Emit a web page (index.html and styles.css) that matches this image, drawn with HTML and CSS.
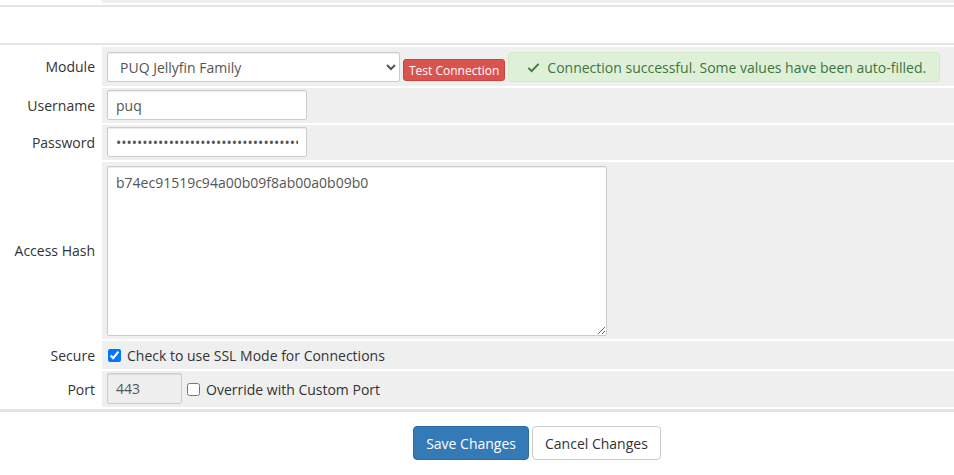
FILE: index.html
```html
<!DOCTYPE html>
<html lang="en">
<head>
    <meta charset="UTF-8">
    <title>Server Configuration</title>
    <link rel="stylesheet" href="styles.css">
</head>
<body>
    <div class="prev-row">
        <div class="prev-label"></div>
        <div class="prev-field"></div>
    </div>
    <div class="divider"></div>
    <div class="spacer"></div>
    <div class="divider flush"></div>

    <table class="form-table">
        <tr>
            <td class="fieldlabel">Module</td>
            <td class="fieldarea">
                <div class="module-line">
                    <select class="form-control select-module">
                        <option>PUQ Jellyfin Family</option>
                    </select>
                    <button type="button" class="btn-test">Test Connection</button>
                    <div class="alert-success">
                        <svg class="check-icon" viewBox="0 0 14 14" width="13" height="13">
                            <path d="M1.5 7.5 L5 11 L12.5 3" fill="none" stroke="#3c763d" stroke-width="2"/>
                        </svg>
                        <span>Connection successful. Some values have been auto-filled.</span>
                    </div>
                </div>
            </td>
        </tr>
        <tr>
            <td class="fieldlabel">Username</td>
            <td class="fieldarea">
                <input type="text" class="form-control input-md" value="puq">
            </td>
        </tr>
        <tr>
            <td class="fieldlabel">Password</td>
            <td class="fieldarea">
                <input type="password" class="form-control input-md" value="aaaaaaaaaaaaaaaaaaaaaaaaaaaaaaaaaaaaaaaaaaaa">
            </td>
        </tr>
        <tr>
            <td class="fieldlabel">Access Hash</td>
            <td class="fieldarea">
                <textarea class="form-control textarea-hash">b74ec91519c94a00b09f8ab00a0b09b0</textarea>
            </td>
        </tr>
        <tr>
            <td class="fieldlabel">Secure</td>
            <td class="fieldarea">
                <label class="check-label">
                    <input type="checkbox" checked>
                    Check to use SSL Mode for Connections
                </label>
            </td>
        </tr>
        <tr>
            <td class="fieldlabel">Port</td>
            <td class="fieldarea">
                <div class="port-line">
                    <input type="text" class="form-control input-port" value="443" disabled>
                    <label class="check-label">
                        <input type="checkbox">
                        Override with Custom Port
                    </label>
                </div>
            </td>
        </tr>
    </table>
    <div class="divider bottom"></div>

    <div class="btn-container">
        <button type="button" class="btn btn-primary">Save Changes</button>
        <button type="button" class="btn btn-default">Cancel Changes</button>
    </div>
</body>
</html>
```

FILE: styles.css
```css
:root {
    --field-bg: #efefef;
    --line: #e2e5e8;
    --border: #cccccc;
    --text: #333333;
    --input-text: #555555;
}

* {
    box-sizing: border-box;
}

body {
    margin: 0;
    font-family: "Open Sans", "Liberation Sans", sans-serif;
    font-size: 14px;
    color: var(--text);
    background: #ffffff;
}

.prev-row {
    display: grid;
    grid-template-columns: 102px 1fr;
    height: 3px;
}

.prev-field {
    background: var(--field-bg);
}

.divider {
    height: 2px;
    margin-top: 2px;
    background: var(--line);
}

.divider.flush {
    margin-top: 0;
}

.divider.bottom {
    height: 3px;
    margin-top: 0;
}

.spacer {
    height: 36px;
}

.form-table {
    width: 100%;
    border-collapse: separate;
    border-spacing: 0 2px;
}

.fieldlabel {
    width: 102px;
    padding: 0 7px 0 0;
    text-align: right;
    white-space: nowrap;
}

.fieldarea {
    background: var(--field-bg);
    padding: 2px 5px 3px;
}

.form-control {
    font-family: inherit;
    font-size: 14px;
    color: var(--input-text);
    background: #ffffff;
    border: 1px solid var(--border);
    border-radius: 2px;
    box-shadow: inset 0 1px 1px rgba(0, 0, 0, 0.075);
}

.module-line {
    display: flex;
    align-items: center;
    gap: 3px;
    padding: 3px 0 1px;
}

.select-module {
    width: 293px;
    height: 30px;
    padding: 0 6px 0 8px;
}

.btn-test {
    align-self: flex-end;
    margin-bottom: 1px;
    height: 22px;
    padding: 0 5px;
    font-family: inherit;
    font-size: 12px;
    color: #ffffff;
    background: #d9534f;
    border: 1px solid #d43f3a;
    border-radius: 3px;
}

.alert-success {
    display: flex;
    align-items: center;
    gap: 7px;
    width: 432px;
    height: 30px;
    padding: 0 10px 0 18px;
    color: #3c763d;
    background: #dff0d8;
    border: 1px solid #d6e9c6;
    border-radius: 4px;
    white-space: nowrap;
}

.check-icon {
    flex-shrink: 0;
}

.input-md {
    width: 200px;
    height: 30px;
    padding: 0 8px;
}

.textarea-hash {
    display: block;
    width: 500px;
    height: 170px;
    margin-top: 2px;
    padding: 6px 8px;
    line-height: 20px;
    resize: vertical;
}

.check-label {
    display: inline-flex;
    align-items: center;
    gap: 6px;
    color: var(--text);
    padding: 3px 0 1px;
}

.check-label input {
    margin: 0 0 0 1px;
    width: 13px;
    height: 13px;
}

.port-line {
    display: flex;
    align-items: center;
    gap: 4px;
}

.input-port {
    width: 75px;
    height: 31px;
    padding: 0 8px;
    background: #eeeeee;
    color: var(--input-text);
}

.btn-container {
    display: flex;
    justify-content: center;
    gap: 3px;
    padding: 14px 0 0 120px;
}

.btn {
    height: 34px;
    padding: 0 12px;
    font-family: inherit;
    font-size: 14px;
    border-radius: 4px;
    border: 1px solid transparent;
}

.btn-primary {
    color: #ffffff;
    background: #337ab7;
    border-color: #2e6da4;
}

.btn-default {
    color: #333333;
    background: #ffffff;
    border-color: #cccccc;
}
```
